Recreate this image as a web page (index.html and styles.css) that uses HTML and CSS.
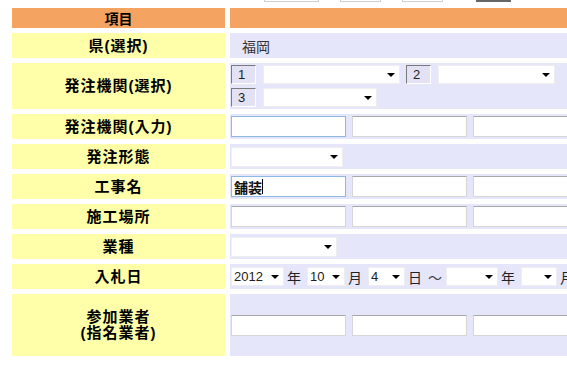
FILE: index.html
```html
<!DOCTYPE html>
<html lang="ja">
<head>
  <meta charset="UTF-8">
  <meta name="viewport" content="width=device-width, initial-scale=1.0">
  <title>検索条件</title>
  <link rel="stylesheet" href="styles.css">
</head>
<body>
  <div class="top-strip">
    <span class="stub w55"></span>
    <span class="stub w41"></span>
    <span class="stub w41"></span>
    <span class="stub dark"></span>
  </div>

  <div class="form-grid">
    <div class="head">項目</div>
    <div class="head"></div>

    <div class="label">県(選択)</div>
    <div class="value plain">福岡</div>

    <div class="label">発注機関(選択)</div>
    <div class="value stack">
      <div class="line">
        <span class="num">1</span>
        <span class="sel"><select class="w137"><option></option></select></span>
        <span class="num">2</span>
        <span class="sel"><select class="w117"><option></option></select></span>
      </div>
      <div class="line">
        <span class="num">3</span>
        <span class="sel"><select class="w114"><option></option></select></span>
      </div>
    </div>

    <div class="label">発注機関(入力)</div>
    <div class="value">
      <input type="text" class="txt active">
      <input type="text" class="txt">
      <input type="text" class="txt">
    </div>

    <div class="label">発注形態</div>
    <div class="value">
      <span class="sel"><select class="w112 tall"><option></option></select></span>
    </div>

    <div class="label">工事名</div>
    <div class="value">
      <div class="txt active fake">舗装<span class="caret"></span></div>
      <input type="text" class="txt">
      <input type="text" class="txt">
    </div>

    <div class="label">施工場所</div>
    <div class="value">
      <input type="text" class="txt">
      <input type="text" class="txt">
      <input type="text" class="txt">
    </div>

    <div class="label">業種</div>
    <div class="value">
      <span class="sel"><select class="w106 tall"><option></option></select></span>
    </div>

    <div class="label">入札日</div>
    <div class="value dates">
      <span class="sel"><select class="w53"><option>2012</option></select></span>
      <span class="unit">年</span>
      <span class="sel"><select class="w38"><option>10</option></select></span>
      <span class="unit">月</span>
      <span class="sel"><select class="w37"><option>4</option></select></span>
      <span class="unit">日</span>
      <span class="unit wave">～</span>
      <span class="sel"><select class="w52"><option></option></select></span>
      <span class="unit">年</span>
      <span class="sel"><select class="w36"><option></option></select></span>
      <span class="unit">月</span>
    </div>

    <div class="label tall-label">参加業者<br>(指名業者)</div>
    <div class="value">
      <input type="text" class="txt">
      <input type="text" class="txt">
      <input type="text" class="txt">
    </div>
  </div>
</body>
</html>
```

FILE: styles.css
```css
* { box-sizing: border-box; }
body {
  margin: 0;
  background: #fff;
  overflow: hidden;
  font-family: "Liberation Sans", "Noto Sans CJK JP", sans-serif;
  font-size: 13px;
  color: #000;
}
.top-strip {
  display: flex;
  align-items: flex-start;
  height: 3px;
  padding-left: 264px;
}
.stub {
  height: 2px;
  border: 1px solid #cfcfcf;
  border-top: none;
  background: #fff;
  margin-right: 21px;
}
.stub.w55 { width: 55px; }
.stub.w41 { width: 41px; }
.stub.dark {
  width: 35px;
  margin-left: 12px;
  background: #666;
  border: none;
}
.form-grid {
  display: grid;
  grid-template-columns: 213px 420px;
  gap: 5px;
  margin: 5px 0 0 12px;
}
.head {
  height: 20px;
  background: #f4a460;
  font-family: "Noto Sans CJK JP", sans-serif;
  font-weight: bold;
  font-size: 14px;
  line-height: 20px;
  text-align: center;
}
.label {
  min-height: 25px;
  background: #ffffaa;
  display: flex;
  align-items: center;
  justify-content: center;
  text-align: center;
  font-family: "Liberation Sans", "Noto Sans CJK JP", sans-serif;
  font-weight: bold;
  font-size: 15px;
  letter-spacing: 1px;
  line-height: 16px;
}
.tall-label { min-height: 62px; }
.value {
  min-height: 25px;
  background: #e6e6fa;
  display: flex;
  align-items: center;
  gap: 6px;
  padding-left: 1px;
}
.value.plain {
  padding-left: 12px;
  color: #333;
  font-family: "Noto Sans CJK JP", sans-serif;
  font-size: 14px;
}
.value.stack {
  flex-direction: column;
  align-items: flex-start;
  gap: 4px;
  padding: 2px 1px;
}
.line {
  display: flex;
  align-items: center;
}
.num {
  width: 25px;
  height: 19px;
  padding-left: 6px;
  line-height: 17px;
  background: #e2e2f4;
  border: 1px solid;
  border-color: #7a7a7a #fff #fff #7a7a7a;
  margin-right: 7px;
  color: #222;
}
.line .sel { margin-right: 6px; }
.txt {
  width: 115px;
  height: 21px;
  margin: 0;
  padding: 0 2px;
  background: #fff;
  border: 1px solid #d6d6d6;
  border-top-color: #a8a8a8;
  font: 14px "Noto Sans CJK JP", sans-serif;
  flex: none;
}
.txt.active { border-color: #8db8e2; }
.fake {
  display: flex;
  align-items: center;
  font-weight: bold;
  color: #111;
}
.caret {
  width: 1px;
  height: 15px;
  background: #000;
}
.sel {
  position: relative;
  display: inline-flex;
  flex: none;
}
.sel select {
  appearance: none;
  -webkit-appearance: none;
  height: 19px;
  margin: 0;
  padding: 0 2px;
  background: #fff;
  border: 1px solid #eeeeee;
  border-radius: 0;
  font: 13px "Liberation Sans", sans-serif;
  color: #222;
}
.sel::after {
  content: "";
  position: absolute;
  right: 5px;
  top: 8px;
  border-left: 4px solid transparent;
  border-right: 4px solid transparent;
  border-top: 4px solid #000;
}
.sel select.tall { height: 20px; }
.w137 { width: 137px; }
.w117 { width: 117px; }
.w114 { width: 114px; }
.w112 { width: 112px; }
.w106 { width: 106px; }
.w53 { width: 53px; }
.w52 { width: 52px; }
.w38 { width: 38px; }
.w37 { width: 37px; }
.w36 { width: 36px; }
.dates { gap: 0; }
.unit {
  font-family: "Noto Sans CJK JP", sans-serif;
  font-size: 14px;
  color: #222;
  margin: 0 6px 0 3px;
}
.wave { margin: 0 4px 0 0; color: #444; }
```
